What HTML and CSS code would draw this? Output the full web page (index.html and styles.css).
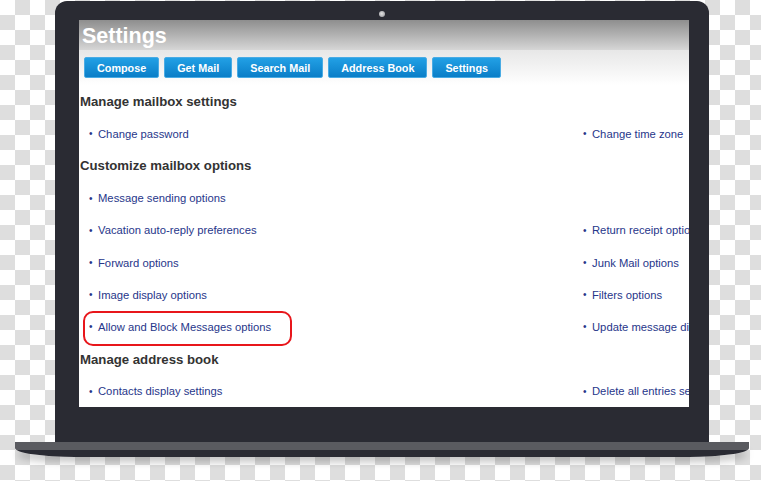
FILE: index.html
```html
<!DOCTYPE html>
<html lang="en">
<head>
  <meta charset="UTF-8">
  <title>Settings</title>
  <link rel="stylesheet" href="styles.css">
</head>
<body>
  <div class="laptop">
    <div class="lid">
      <div class="bezel-top"><span class="camera"></span></div>

      <div class="screen">
        <div class="mail-head">
          <h1>Settings</h1>
          <div class="tabs">
            <button>Compose</button>
            <button>Get Mail</button>
            <button>Search Mail</button>
            <button>Address Book</button>
            <button>Settings</button>
          </div>
        </div>

        <div class="options">
          <h2>Manage mailbox settings</h2>
          <a class="opt" href="#">Change password</a>
          <a class="opt" href="#">Change time zone</a>

          <h2>Customize mailbox options</h2>
          <a class="opt" href="#">Message sending options</a>
          <span></span>
          <a class="opt" href="#">Vacation auto-reply preferences</a>
          <a class="opt" href="#">Return receipt options</a>
          <a class="opt" href="#">Forward options</a>
          <a class="opt" href="#">Junk Mail options</a>
          <a class="opt" href="#">Image display options</a>
          <a class="opt" href="#">Filters options</a>
          <a class="opt marked" href="#">Allow and Block Messages options</a>
          <a class="opt" href="#">Update message display options</a>

          <h2>Manage address book</h2>
          <a class="opt" href="#">Contacts display settings</a>
          <a class="opt" href="#">Delete all entries settings</a>
        </div>
      </div>
    </div>
    <div class="base"></div>
  </div>
</body>
</html>
```

FILE: styles.css
```css
body {
  margin: 0;
  width: 761px;
  height: 481px;
  overflow: hidden;
  font-family: "Liberation Sans", Arial, sans-serif;
  background-color: #ffffff;
  background-image: conic-gradient(#dedede 25%, #ffffff 0 50%, #dedede 0 75%, #ffffff 0);
  background-size: 30px 30px;
}

.laptop {
  padding-top: 1px;
}

/* lid + screen */
.lid {
  margin-left: 55px;
  width: 654px;
  background: #2a2b33;
  border-radius: 12px 12px 0 0;
}

.bezel-top {
  height: 19px;
  display: flex;
  justify-content: center;
  align-items: flex-start;
}

.camera {
  width: 6px;
  height: 6px;
  margin-top: 10px;
  border-radius: 50%;
  background: radial-gradient(circle at 45% 45%, #e2e2e2, #a9a9ad 70%, #55565c);
}

.screen {
  margin: 0 20px 0 24px;
  width: 610px;
  height: 387px;
  background: #ffffff;
  overflow: hidden;
  border-bottom: 35px solid #2a2b33;
  box-sizing: content-box;
}

.mail-head {
  height: 65px;
  box-sizing: border-box;
  padding: 5px 0 0 3px;
  background: linear-gradient(#8e8e8e 0, #d6d6d6 30px, #e7e7e7 30px, #ffffff 65px);
}

.mail-head h1 {
  margin: 0;
  font-size: 21.5px;
  line-height: 22px;
  font-weight: bold;
  color: #ffffff;
}

.tabs {
  display: flex;
  gap: 5px;
  margin: 10px 0 0 2px;
}

.tabs button {
  height: 21px;
  padding: 0 12px;
  font-family: inherit;
  font-size: 10.8px;
  font-weight: bold;
  color: #ffffff;
  background: linear-gradient(#22a0e5, #0a7ec8);
  border: 1px solid #49abe4;
  border-radius: 2px;
}

/* settings lists */
.options {
  display: grid;
  grid-template-columns: 494px 1fr;
  grid-auto-rows: 32.2px;
  padding: 0.5px 0 0 1px;
}

.options h2 {
  grid-column: 1 / -1;
  display: flex;
  align-items: center;
  margin: 0;
  font-size: 13.2px;
  font-weight: bold;
  color: #333333;
}

.opt {
  display: flex;
  align-items: center;
  white-space: nowrap;
  font-size: 11.25px;
  color: #27368a;
  text-decoration: none;
}

.opt::before {
  content: "\2022";
  width: 18px;
  padding-left: 9px;
  box-sizing: border-box;
  font-size: 10px;
}

.opt.marked {
  position: relative;
}

.opt.marked::after {
  content: "";
  position: absolute;
  left: 3px;
  top: 0;
  width: 209px;
  height: 35px;
  box-sizing: border-box;
  border: 2.5px solid #e8161b;
  border-radius: 10px;
}

/* keyboard base */
.base {
  margin-left: 15px;
  width: 734px;
  height: 15px;
  background: linear-gradient(#5a5b60 0, #5a5b60 8px, #2a2b33 8px);
  border-radius: 0 0 60px 60px / 0 0 9px 9px;
  box-shadow: 0 7px 9px -3px rgba(0, 0, 0, 0.28);
}
```
